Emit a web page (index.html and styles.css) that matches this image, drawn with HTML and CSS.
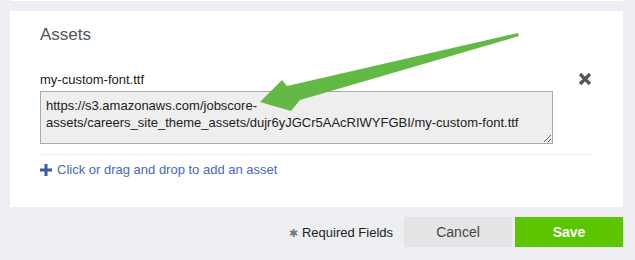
FILE: index.html
```html
<!DOCTYPE html>
<html>
<head>
<meta charset="utf-8">
<link rel="stylesheet" href="styles.css">
</head>
<body>
<div class="page">
  <div class="prev"></div>
  <div class="card">
    <h2 class="title">Assets</h2>
    <div class="asset">
      <div class="asset-main">
        <div class="label">my-custom-font.ttf</div>
        <textarea class="url">https://s3.amazonaws.com/jobscore-assets/careers_site_theme_assets/dujr6yJGCr5AAcRIWYFGBI/my-custom-font.ttf</textarea>
      </div>
      <div class="remove">
        <svg width="14" height="14" viewBox="0 0 14 14"><path d="M2 2 L12 12 M12 2 L2 12" stroke="#555" stroke-width="3.2" stroke-linecap="butt"/></svg>
      </div>
    </div>
    <div class="sep"></div>
    <div class="add">
      <svg class="plus" width="12" height="12" viewBox="0 0 12 12"><path d="M6 0 V12 M0 6 H12" stroke="#3b5aa6" stroke-width="3"/></svg>
      <span>Click or drag and drop to add an asset</span>
    </div>
    <svg class="arrow" width="635" height="130" viewBox="0 0 635 130">
      <polygon points="518,33 519,36 300,100 291,111 260,102 282,80 287,86" fill="#63b946"/>
    </svg>
  </div>
  <div class="footer">
    <span class="req"><span class="star">&#x2731;</span> Required Fields</span>
    <button class="btn cancel">Cancel</button>
    <button class="btn save">Save</button>
  </div>
</div>
</body>
</html>
```
FILE: styles.css
```css
html, body { margin: 0; padding: 0; }
body {
  background: #eceef2;
  font-family: "Liberation Sans", Arial, sans-serif;
  width: 635px;
  height: 260px;
  overflow: hidden;
}
.page { padding: 0 12px 0 10px; }
.prev { height: 1px; background: #fff; margin-bottom: 10px; }
.card {
  position: relative;
  background: #fff;
  height: 196px;
  box-sizing: border-box;
  padding: 14px 30px 0 30px;
}
.title {
  margin: 0;
  font-size: 17px;
  line-height: 20px;
  font-weight: normal;
  color: #555;
}
.asset { display: flex; margin-top: 27px; }
.asset-main { width: 513px; }
.label { font-size: 13px; line-height: 16px; color: #222; }
.url {
  display: block;
  margin-top: 3px;
  width: 513px;
  height: 53px;
  box-sizing: border-box;
  border: 1px solid #aaa;
  background: #eee;
  padding: 5px 5px;
  font-family: "Liberation Sans", Arial, sans-serif;
  font-size: 13px;
  line-height: 17px;
  color: #222;
  resize: vertical;
  border-radius: 0;
}
.remove { margin-left: 25px; padding-top: 0; }
.sep { height: 1px; background: #eee; margin-top: 10px; }
.add {
  display: flex;
  align-items: center;
  gap: 5px;
  margin-top: 7px;
  font-size: 13px;
  line-height: 16px;
  color: #4a68bd;
}
.arrow { position: absolute; left: -10px; top: -11px; pointer-events: none; }
.footer {
  display: flex;
  justify-content: flex-end;
  align-items: center;
  margin-top: 10px;
  gap: 3px;
}
.req { font-size: 13px; color: #222; margin-right: 8px; }
.star { color: #777; font-size: 11px; }
.btn {
  width: 108px;
  height: 30px;
  border: none;
  font-family: "Liberation Sans", Arial, sans-serif;
  font-size: 14px;
  padding: 0;
}
.cancel { background: #e4e4e4; color: #444; }
.save { background: #5bc500; color: #fff; font-weight: bold; }
```
